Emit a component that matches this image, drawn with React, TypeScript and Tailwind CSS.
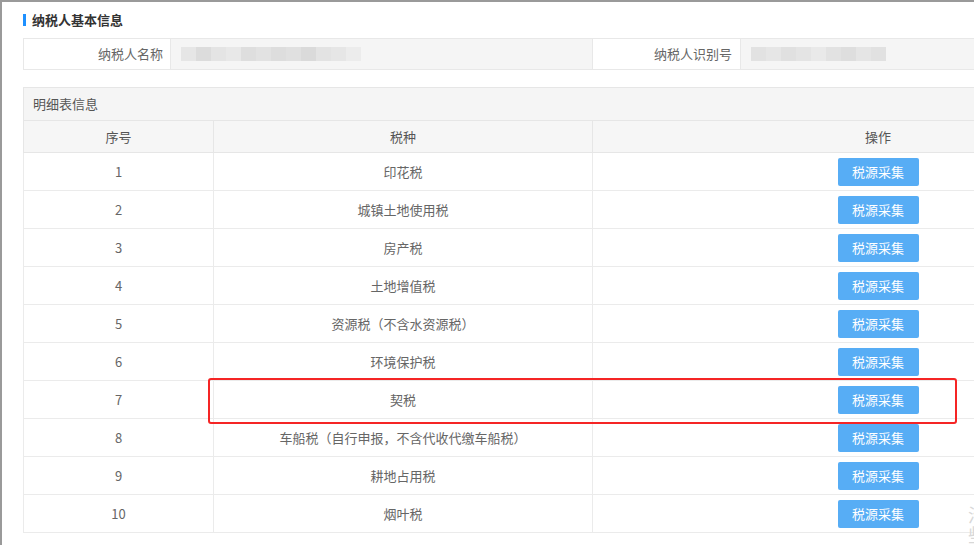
import React from "react";

const taxes = [
  "印花税",
  "城镇土地使用税",
  "房产税",
  "土地增值税",
  "资源税（不含水资源税）",
  "环境保护税",
  "契税",
  "车船税（自行申报，不含代收代缴车船税）",
  "耕地占用税",
  "烟叶税",
];

const shades1 = ["#e6e6e6", "#dcdcdc", "#e4e4e4", "#e8e8e8", "#dedede", "#e2e2e2", "#dddddd", "#e0e0e0", "#dadada", "#e3e3e3", "#e6e6e6", "#ececec"];
const shades2 = ["#e2e2e2", "#e6e6e6", "#e0e0e0", "#e4e4e4", "#e9e9e9", "#e2e2e2", "#dedede", "#e5e5e5", "#e1e1e1"];

const Mosaic: React.FC<{ shades: string[] }> = ({ shades }) => (
  <div className="flex h-[14px]">
    {shades.map((c, i) => (
      <div key={i} className="h-full w-[15px]" style={{ backgroundColor: c }} />
    ))}
  </div>
);

const App: React.FC = () => {
  return (
    <div
      className="relative h-[545px] w-[974px] overflow-hidden border-l-[2px] border-t-[2px] border-[#9a9a9a] bg-white text-[13px] text-[#666]"
      style={{ fontFamily: '"Noto Sans CJK SC", "Noto Sans", sans-serif' }}
    >
      <div className="w-[1162px] shrink-0 pl-[21px]">
        {/* title */}
        <div className="flex h-[36px] items-center">
          <span className="mr-[6px] h-[12px] w-[3px] bg-[#1e90ff]" />
          <span className="font-bold text-[#333]">纳税人基本信息</span>
        </div>

        {/* basic info */}
        <table className="w-full table-fixed border-collapse">
          <colgroup>
            <col className="w-[147px]" />
            <col className="w-[422px]" />
            <col className="w-[148px]" />
            <col />
          </colgroup>
          <tbody>
            <tr className="h-[31px]">
              <td className="border border-[#e8e8e8] bg-white pr-[7px] text-right">纳税人名称</td>
              <td className="border border-[#e8e8e8] bg-[#f5f5f5] pl-[10px]">
                <Mosaic shades={shades1} />
              </td>
              <td className="border border-[#e8e8e8] bg-white pr-[8px] text-right">纳税人识别号</td>
              <td className="border border-[#e8e8e8] bg-[#f5f5f5] pl-[10px]">
                <Mosaic shades={shades2} />
              </td>
            </tr>
          </tbody>
        </table>

        {/* detail */}
        <table className="mt-[17px] w-full table-fixed border-collapse">
          <colgroup>
            <col className="w-[190px]" />
            <col className="w-[379px]" />
            <col />
          </colgroup>
          <thead>
            <tr className="h-[33px] bg-[#f5f5f5]">
              <th colSpan={3} className="border border-[#e6e6e6] pl-[9px] text-left font-normal text-[#555]">
                明细表信息
              </th>
            </tr>
            <tr className="h-[32px] bg-[#f6f6f6]">
              <th className="border border-[#e6e6e6] font-normal text-[#555]">序号</th>
              <th className="border border-[#e6e6e6] font-normal text-[#555]">税种</th>
              <th className="border border-[#e6e6e6] font-normal text-[#555]">操作</th>
            </tr>
          </thead>
          <tbody>
            {taxes.map((t, i) => (
              <tr key={t} className="h-[38px] bg-white">
                <td className="border border-[#ebebeb] text-center">{i + 1}</td>
                <td className="border border-[#ebebeb] text-center">{t}</td>
                <td className="border border-[#ebebeb] text-center">
                  <button className="inline-flex h-[28px] w-[81px] items-center justify-center rounded-[2px] bg-[#57adf5] text-[13px] text-white">
                    税源采集
                  </button>
                </td>
              </tr>
            ))}
          </tbody>
        </table>
      </div>

      {/* highlight box */}
      <div className="pointer-events-none absolute left-[206px] top-[376px] h-[46px] w-[749px] rounded-[3px] border-2 border-[#f52525]" />

      {/* watermark edge */}
      <div className="pointer-events-none absolute left-[966px] top-[502px] flex flex-col text-[18px] leading-[20px] text-[#d8d8d8]">
        <span>治</span>
        <span>些</span>
      </div>
    </div>
  );
};

export default App;
